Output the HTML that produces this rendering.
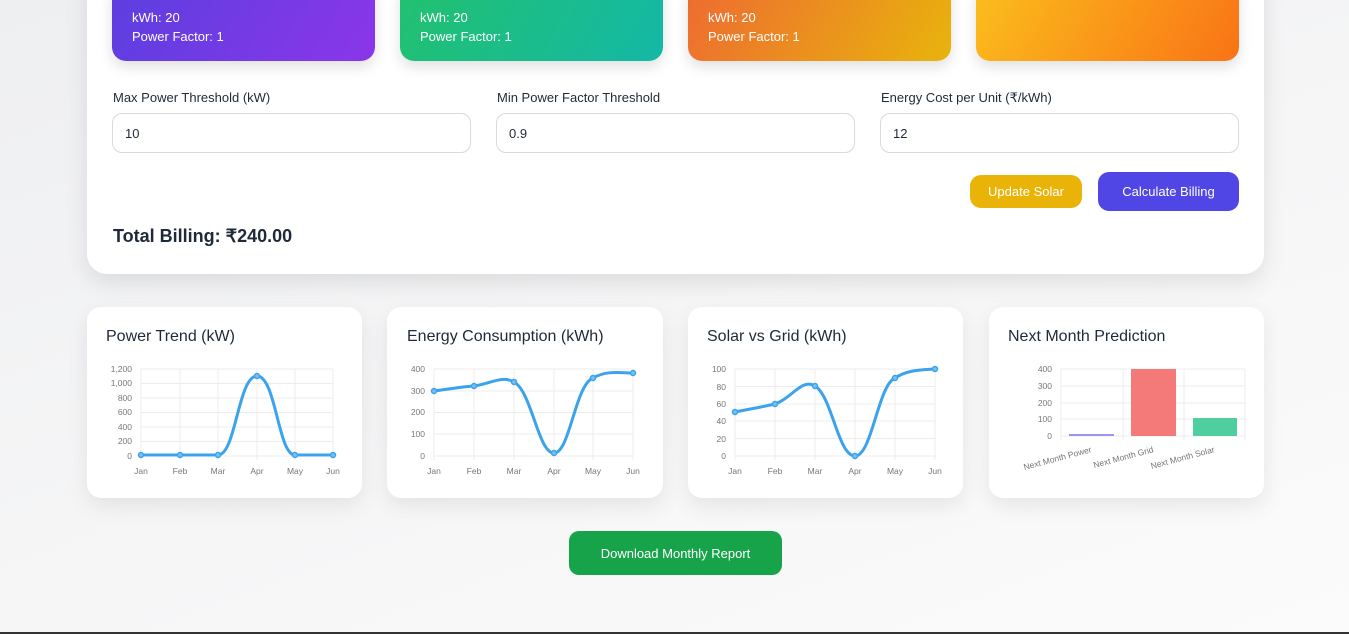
<!DOCTYPE html>
<html><head><meta charset="utf-8"><style>
*{box-sizing:border-box;margin:0;padding:0}
body{width:1349px;height:634px;overflow:hidden;position:relative;font-family:"Liberation Sans",sans-serif;background:linear-gradient(160deg,#eeeff1 0%,#f6f6f7 55%,#fbfbfb 100%);color:#1f2937}
.abs{position:absolute}
.panel{left:87px;top:-30px;width:1177px;height:304px;background:#fff;border-radius:20px;box-shadow:0 8px 24px rgba(0,0,0,.10)}
.tc{top:-20px;width:263px;height:81px;border-radius:14px;color:#fff;font-size:13px;padding:28px 0 0 20px;line-height:19px;box-shadow:0 6px 14px rgba(0,0,0,.12)}
.lbl{font-size:13px;color:#1f2937;top:90px}
.inp{top:113px;width:359px;height:40px;border:1px solid #d9d9de;border-radius:10px;font-size:13px;padding:12px 0 0 12px;background:#fff}
.btn{color:#fff;font-size:13px;display:flex;align-items:center;justify-content:center}
.cc{top:307px;height:191px;background:#fff;border-radius:14px;box-shadow:0 8px 22px rgba(0,0,0,.08)}
.ct{font-size:16px;color:#1f2937;top:328px}
svg text{font-family:"Liberation Sans",sans-serif;font-size:8.5px;fill:#777}
</style></head><body>
<div class="abs panel"></div>
<div class="abs tc" style="left:112px;background:linear-gradient(120deg,#5b3fe0,#8b36e8)">kWh: 20<br>Power Factor: 1</div>
<div class="abs tc" style="left:400px;background:linear-gradient(120deg,#22c16e,#14b8a6)">kWh: 20<br>Power Factor: 1</div>
<div class="abs tc" style="left:688px;background:linear-gradient(120deg,#ee6a32,#e8b40c)">kWh: 20<br>Power Factor: 1</div>
<div class="abs tc" style="left:976px;background:linear-gradient(120deg,#fbbf1c,#f97316)"></div>

<div class="abs lbl" style="left:113px">Max Power Threshold (kW)</div>
<div class="abs lbl" style="left:497px">Min Power Factor Threshold</div>
<div class="abs lbl" style="left:881px">Energy Cost per Unit (₹/kWh)</div>
<div class="abs inp" style="left:112px">10</div>
<div class="abs inp" style="left:496px">0.9</div>
<div class="abs inp" style="left:880px">12</div>
<div class="abs btn" style="left:970px;top:175px;width:112px;height:33px;background:#eab308;border-radius:11px">Update Solar</div>
<div class="abs btn" style="left:1098px;top:172px;width:141px;height:39px;background:#4f46e5;border-radius:11px">Calculate Billing</div>
<div class="abs" style="left:113px;top:226px;font-size:18px;font-weight:bold;color:#1f2937">Total Billing: ₹240.00</div>

<div class="abs cc" style="left:87px;width:275px"></div>
<div class="abs cc" style="left:387px;width:276px"></div>
<div class="abs cc" style="left:688px;width:275px"></div>
<div class="abs cc" style="left:989px;width:275px"></div>
<div class="abs ct" style="left:106px">Power Trend (kW)</div>
<div class="abs ct" style="left:407px">Energy Consumption (kWh)</div>
<div class="abs ct" style="left:707px">Solar vs Grid (kWh)</div>
<div class="abs ct" style="left:1008px">Next Month Prediction</div>

<svg class="abs" style="left:0;top:0" width="1349" height="634">
<g stroke="#ececec" stroke-width="1" fill="none">
<path d="M141,369H333M141,383.5H333M141,398H333M141,412.5H333M141,427H333M141,441.5H333M141,456H333"/>
<path d="M141,369V460M180,369V460M218,369V460M257,369V460M295,369V460M333,369V460"/>
<path d="M434,369H633M434,391H633M434,412.5H633M434,434H633M434,456H633"/>
<path d="M434,369V460M474,369V460M514,369V460M554,369V460M593,369V460M633,369V460"/>
<path d="M735,369H935M735,386.5H935M735,404H935M735,421H935M735,438.5H935M735,456H935"/>
<path d="M735,369V460M775,369V460M815,369V460M855,369V460M895,369V460M935,369V460"/>
<path d="M1061,369H1245M1061,386H1245M1061,403H1245M1061,419H1245M1061,436H1245"/>
<path d="M1061,369V440M1123,369V440M1184,369V440M1245,369V440"/>
</g>
<g text-anchor="end">
<text x="132" y="372">1,200</text><text x="132" y="386">1,000</text><text x="132" y="401">800</text><text x="132" y="415">600</text><text x="132" y="430">400</text><text x="132" y="444">200</text><text x="132" y="459">0</text>
<text x="425" y="372">400</text><text x="425" y="394">300</text><text x="425" y="415">200</text><text x="425" y="437">100</text><text x="425" y="459">0</text>
<text x="726" y="372">100</text><text x="726" y="390">80</text><text x="726" y="407">60</text><text x="726" y="424">40</text><text x="726" y="442">20</text><text x="726" y="459">0</text>
<text x="1052" y="372">400</text><text x="1052" y="389">300</text><text x="1052" y="406">200</text><text x="1052" y="422">100</text><text x="1052" y="439">0</text>
</g>
<g text-anchor="middle">
<text x="141" y="474">Jan</text><text x="180" y="474">Feb</text><text x="218" y="474">Mar</text><text x="257" y="474">Apr</text><text x="295" y="474">May</text><text x="333" y="474">Jun</text>
<text x="434" y="474">Jan</text><text x="474" y="474">Feb</text><text x="514" y="474">Mar</text><text x="554" y="474">Apr</text><text x="593" y="474">May</text><text x="633" y="474">Jun</text>
<text x="735" y="474">Jan</text><text x="775" y="474">Feb</text><text x="815" y="474">Mar</text><text x="855" y="474">Apr</text><text x="895" y="474">May</text><text x="935" y="474">Jun</text>
</g>
<g text-anchor="end">
<text transform="translate(1092,452) rotate(-15)">Next Month Power</text>
<text transform="translate(1154,452) rotate(-15)">Next Month Grid</text>
<text transform="translate(1215,452) rotate(-15)">Next Month Solar</text>
</g>
<rect x="1069" y="434" width="45" height="2" fill="#9a94f5"/>
<rect x="1131" y="369" width="45" height="67" fill="#f47a7a"/>
<rect x="1193" y="418" width="44" height="18" fill="#4fcea0"/>
<g stroke="#3ba3ec" stroke-width="3" fill="none">
<path d="M141,455 L218,455 C236,455 238,376 257,376 C276,376 278,455 295,455 L333,455"/>
<path d="M434,391 C450,389 460,387 474,386 C490,384 502,375 514,382 C532,392 538,453 554,453 C570,453 575,385 593,378 C607,370 620,373 633,373"/>
<path d="M735,412 C750,409 762,407 775,404 C792,398 802,378 815,386 C832,396 838,456 855,456 C872,456 878,385 895,378 C907,370 920,370 935,369"/>
</g>
<g fill="#7cc0f0" stroke="#3ba3ec" stroke-width="1.5">
<circle cx="141" cy="455" r="2.5"/><circle cx="180" cy="455" r="2.5"/><circle cx="218" cy="455" r="2.5"/><circle cx="257" cy="376" r="2.5"/><circle cx="295" cy="455" r="2.5"/><circle cx="333" cy="455" r="2.5"/>
<circle cx="434" cy="391" r="2.5"/><circle cx="474" cy="386" r="2.5"/><circle cx="514" cy="382" r="2.5"/><circle cx="554" cy="453" r="2.5"/><circle cx="593" cy="378" r="2.5"/><circle cx="633" cy="373" r="2.5"/>
<circle cx="735" cy="412" r="2.5"/><circle cx="775" cy="404" r="2.5"/><circle cx="815" cy="386" r="2.5"/><circle cx="855" cy="456" r="2.5"/><circle cx="895" cy="378" r="2.5"/><circle cx="935" cy="369" r="2.5"/>
</g>
<rect x="0" y="632" width="1349" height="2" fill="#333"/>
</svg>

<div class="abs btn" style="left:569px;top:531px;width:213px;height:44px;background:#16a34a;border-radius:10px">Download Monthly Report</div>
</body></html>
